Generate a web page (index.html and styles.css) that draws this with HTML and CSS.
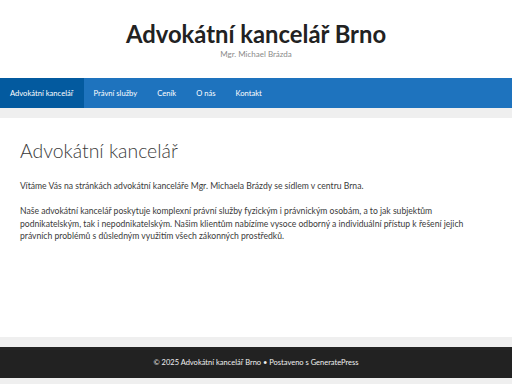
FILE: index.html
```html
<!DOCTYPE html>
<html lang="cs">
<head>
<meta charset="utf-8">
<link rel="stylesheet" href="styles.css">
</head>
<body>
<header class="site-header">
  <div class="site-title">Advokátní kancelář Brno</div>
  <div class="site-desc">Mgr. Michael Brázda</div>
</header>
<nav class="main-nav">
  <a class="nav-item active">Advokátní kancelář</a>
  <a class="nav-item">Právní služby</a>
  <a class="nav-item">Ceník</a>
  <a class="nav-item">O nás</a>
  <a class="nav-item">Kontakt</a>
</nav>
<div class="site-content">
  <main class="content">
    <h1 class="page-title">Advokátní kancelář</h1>
    <p>Vítáme Vás na stránkách advokátní kanceláře Mgr. Michaela Brázdy se sídlem v centru Brna.</p>
    <p>Naše advokátní kancelář poskytuje komplexní právní služby fyzickým i právnickým osobám, a to jak subjektům podnikatelským, tak i nepodnikatelským. Našim klientům nabízíme vysoce odborný a individuální přístup k řešení jejich právních problémů s důsledným využitím všech zákonných prostředků.</p>
  </main>
</div>
<footer class="site-footer">
  <div class="footer-bar">© 2025 Advokátní kancelář Brno • Postaveno s GeneratePress</div>
</footer>
</body>
</html>
```
FILE: styles.css
```css
html, body { margin: 0; padding: 0; }
body {
  background: #efefef;
  font-family: Lato, "Open Sans", sans-serif;
  color: #3a3a3a;
  width: 512px;
  height: 384px;
  overflow: hidden;
}
.site-header {
  background: #fff;
  height: 78px;
  box-sizing: border-box;
  padding-top: 18px;
  text-align: center;
}
.site-title {
  font-size: 23.8px;
  font-weight: 700;
  color: #222;
  line-height: 32px;
}
.site-desc {
  font-size: 8px;
  color: #8a8a8a;
  line-height: 8px;
}
.main-nav {
  background: #1e73be;
  height: 30px;
  display: flex;
  margin-bottom: 10px;
}
.nav-item {
  color: #fff;
  font-size: 7.6px;
  line-height: 30px;
  padding: 0 10px;
}
.nav-item.active { background: #035a9f; }
.site-content {
  background: #fff;
  height: 219px;
  box-sizing: border-box;
  padding: 19px 20px;
}
.page-title {
  margin: 0 0 15px;
  font-weight: 300;
  font-size: 19.4px;
  line-height: 28px;
  color: #3a3a3a;
}
.content p {
  max-width: 462px;
  font-size: 8.6px;
  line-height: 12.5px;
  margin: 0 0 12.5px;
}
.site-footer {
  margin-top: 10px;
  background: #222;
  height: 31px;
}
.footer-bar {
  color: #f0f0f0;
  font-size: 7.5px;
  line-height: 31px;
  text-align: center;
}
```
